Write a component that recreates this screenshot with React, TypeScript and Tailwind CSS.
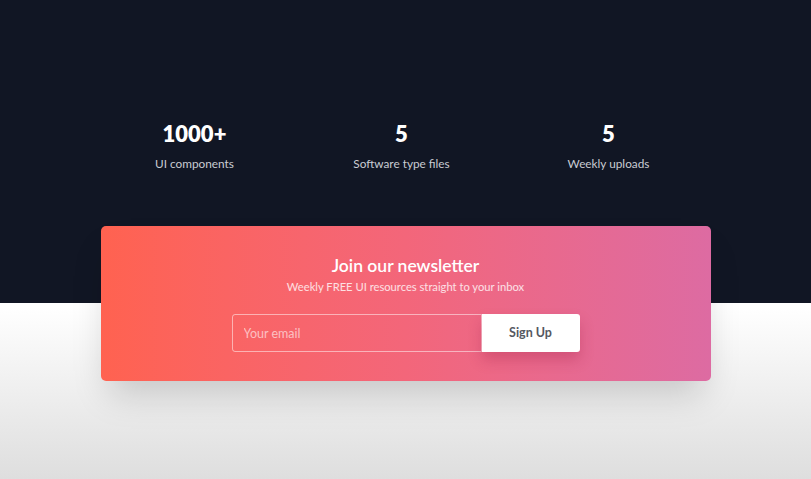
import React from "react";

const stats = [
  { value: "1000+", label: "UI components" },
  { value: "5", label: "Software type files" },
  { value: "5", label: "Weekly uploads" },
];

const App = () => {
  return (
    <div className="min-h-[479px] bg-gradient-to-b from-white from-[64%] to-[#dedede] font-['Lato','Noto_Sans',sans-serif]">
      <section className="h-[303px] bg-[#111624] pt-[119px]">
        <div className="ml-[91px] grid w-[621px] grid-cols-3">
          {stats.map((s, i) => (
            <div key={i} className="flex flex-col items-center">
              <h2 className="text-[22px] font-extrabold leading-[30px] text-white">{s.value}</h2>
              <p className="mt-[6px] text-[11.8px] text-[#c9ccd3]">{s.label}</p>
            </div>
          ))}
        </div>
      </section>

      <div className="mx-auto mt-[-77px] w-[610px] rounded-[5px] bg-gradient-to-r from-[#ff6250] via-[#f3667a] to-[#dd6ba2] pb-[29px] pt-[27px] shadow-[0_20px_34px_-8px_rgba(0,0,0,0.18)]">
        <h3 className="text-center text-[17.5px] font-semibold leading-[26px] text-white">Join our newsletter</h3>
        <p className="text-center text-[11.2px] leading-[16px] text-white/80">
          Weekly FREE UI resources straight to your inbox
        </p>
        <form className="mx-auto mt-[19px] flex h-[38px] w-[348px]">
          <input
            type="text"
            placeholder="Your email"
            className="h-full w-[250px] rounded-l-[3px] border border-white/50 bg-transparent px-[11px] text-[12.5px] text-white outline-none placeholder:text-white/60"
          />
          <button
            type="button"
            className="h-full w-[98px] rounded-r-[3px] bg-white text-[12.5px] font-bold text-[#555861] shadow-[0_8px_14px_rgba(160,30,70,0.3)]"
          >
            Sign Up
          </button>
        </form>
      </div>
    </div>
  );
};

export default App;
